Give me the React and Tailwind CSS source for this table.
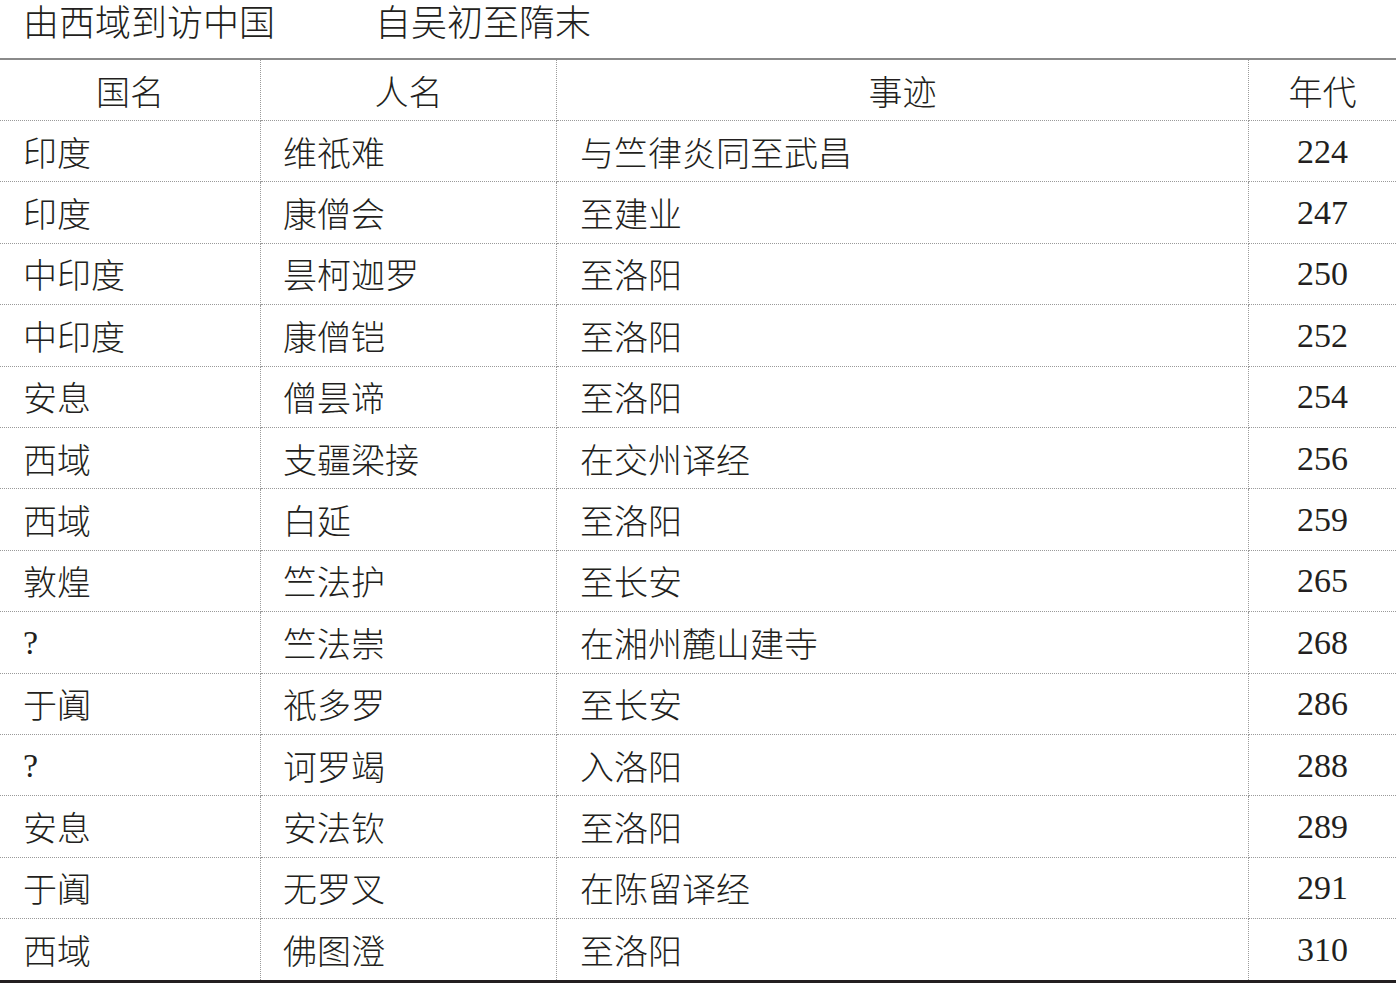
const rows = [
  ["印度", "维祇难", "与竺律炎同至武昌", "224"],
  ["印度", "康僧会", "至建业", "247"],
  ["中印度", "昙柯迦罗", "至洛阳", "250"],
  ["中印度", "康僧铠", "至洛阳", "252"],
  ["安息", "僧昙谛", "至洛阳", "254"],
  ["西域", "支疆梁接", "在交州译经", "256"],
  ["西域", "白延", "至洛阳", "259"],
  ["敦煌", "竺法护", "至长安", "265"],
  ["?", "竺法崇", "在湘州麓山建寺", "268"],
  ["于阗", "祇多罗", "至长安", "286"],
  ["?", "诃罗竭", "入洛阳", "288"],
  ["安息", "安法钦", "至洛阳", "289"],
  ["于阗", "无罗叉", "在陈留译经", "291"],
  ["西域", "佛图澄", "至洛阳", "310"],
];

const cjk = "font-['Noto_Sans_CJK_SC',sans-serif] font-light";
const serif = "font-['Liberation_Serif','Noto_Sans_CJK_SC',serif]";

export default function App() {
  return (
    <div className="w-[1396px] h-[984px] bg-white text-[#231f20] overflow-hidden">
      {/* Title */}
      <div className={`h-[58px] flex items-start pl-[23px] text-[36px] leading-[40px] ${cjk}`}>
        <span>由西域到访中国</span>
        <span className="ml-[100px]">自吴初至隋末</span>
      </div>

      <div className="border-t-2 border-b-[3px] border-t-[#8a8a8a] border-b-[#231f20]">
        {/* Header */}
        <div className={`grid grid-cols-[261px_296px_692px_147px] h-[61px] text-[34px] ${cjk}`}>
          <div className="flex items-center justify-center border-r border-b border-dotted border-[#9a9a9a]">国名</div>
          <div className="flex items-center justify-center border-r border-b border-dotted border-[#9a9a9a]">人名</div>
          <div className="flex items-center justify-center border-r border-b border-dotted border-[#9a9a9a]">事迹</div>
          <div className="flex items-center justify-center border-b border-dotted border-[#9a9a9a]">年代</div>
        </div>

        {rows.map((r, i) => {
          const last = i === rows.length - 1;
          const b = last ? "" : "border-b";
          return (
            <div key={i} className="grid grid-cols-[261px_296px_692px_147px] h-[61.4px] text-[34px]">
              <div className={`flex items-center pl-[23px] border-r border-dotted border-[#9a9a9a] ${b} ${r[0] === "?" ? serif : cjk}`}>
                {r[0]}
              </div>
              <div className={`flex items-center pl-[22px] border-r border-dotted border-[#9a9a9a] ${b} ${cjk}`}>{r[1]}</div>
              <div className={`flex items-center pl-[23px] border-r border-dotted border-[#9a9a9a] ${b} ${cjk}`}>{r[2]}</div>
              <div className={`flex items-center justify-center text-[34px] border-dotted border-[#9a9a9a] ${b} ${serif}`}>{r[3]}</div>
            </div>
          );
        })}
      </div>
    </div>
  );
}
